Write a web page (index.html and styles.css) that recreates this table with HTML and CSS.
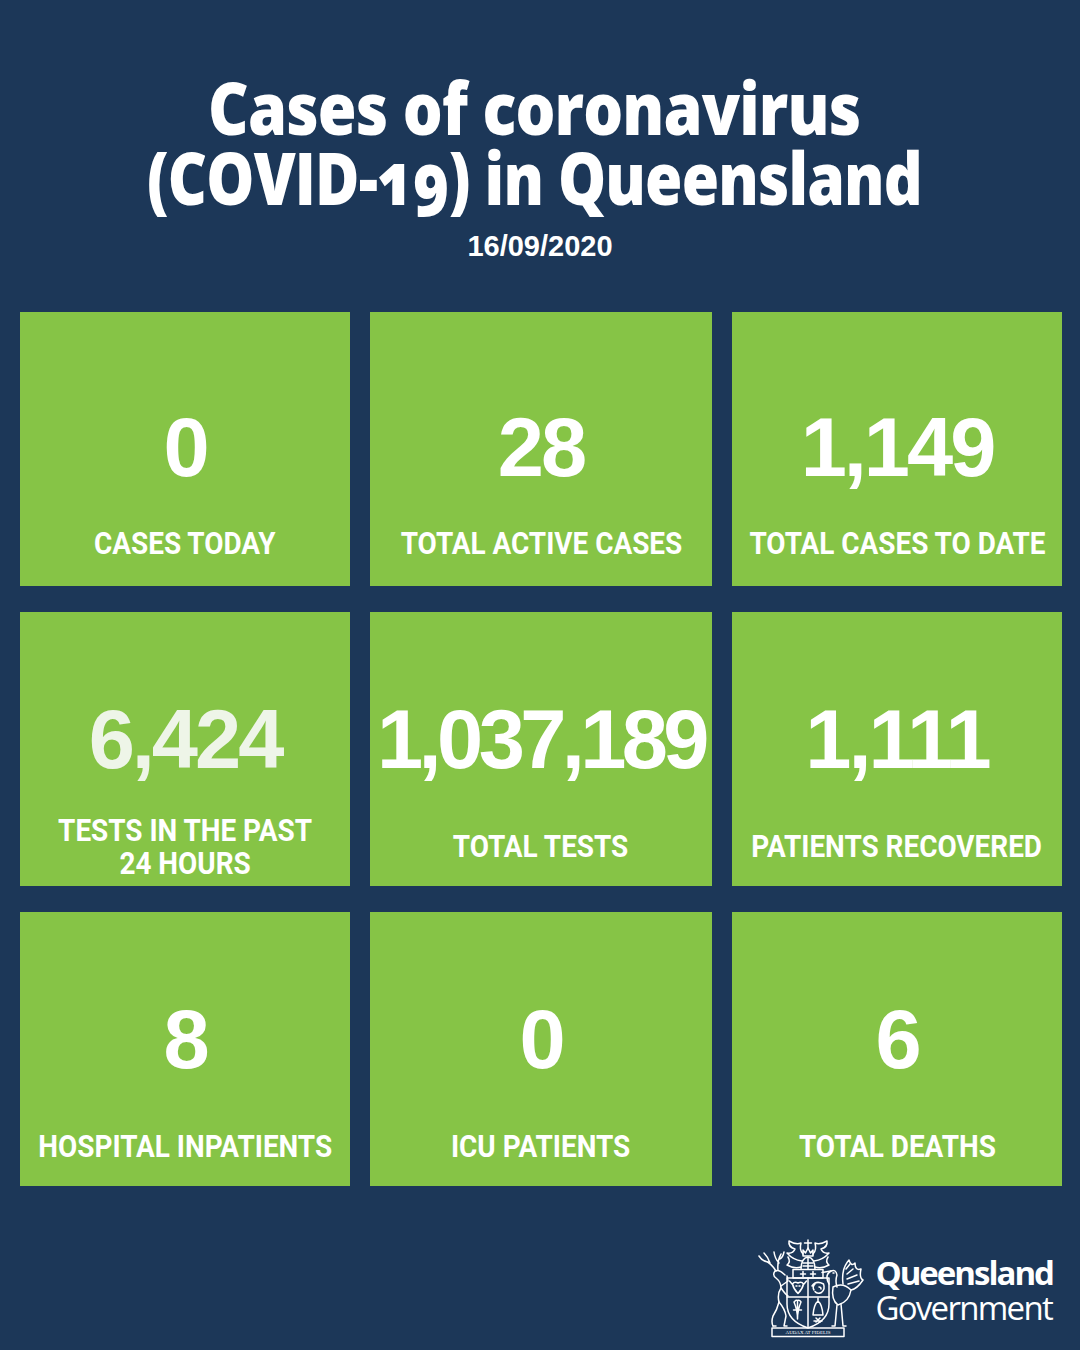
FILE: index.html
```html
<!DOCTYPE html>
<html lang="en">
<head>
<meta charset="utf-8">
<title>Cases of coronavirus (COVID-19) in Queensland</title>
<link rel="stylesheet" href="styles.css">
</head>
<body>
<header class="header">
  <h1 class="title">
    <span class="title-line title-line--first">Cases of coronavirus</span><br>
    <span class="title-line title-line--second">(COVID-<span class="onum">19</span>) in Queensland</span>
  </h1>
</header>
<p class="date">16/09/2020</p>

<main class="grid">
  <section class="stat stat--top">
    <div class="stat-value">0</div>
    <div class="stat-label-wrap"><div class="stat-label">CASES TODAY</div></div>
  </section>
  <section class="stat stat--top">
    <div class="stat-value">28</div>
    <div class="stat-label-wrap"><div class="stat-label">TOTAL ACTIVE CASES</div></div>
  </section>
  <section class="stat stat--top">
    <div class="stat-value">1,149</div>
    <div class="stat-label-wrap"><div class="stat-label">TOTAL CASES TO DATE</div></div>
  </section>

  <section class="stat">
    <div class="stat-value stat-value--soft">6,424</div>
    <div class="stat-label-wrap"><div class="stat-label">TESTS IN THE PAST<br>24 HOURS</div></div>
  </section>
  <section class="stat">
    <div class="stat-value stat-value--tight">1,037,189</div>
    <div class="stat-label-wrap"><div class="stat-label">TOTAL TESTS</div></div>
  </section>
  <section class="stat">
    <div class="stat-value">1,111</div>
    <div class="stat-label-wrap"><div class="stat-label">PATIENTS RECOVERED</div></div>
  </section>

  <section class="stat">
    <div class="stat-value">8</div>
    <div class="stat-label-wrap"><div class="stat-label">HOSPITAL INPATIENTS</div></div>
  </section>
  <section class="stat">
    <div class="stat-value">0</div>
    <div class="stat-label-wrap"><div class="stat-label">ICU PATIENTS</div></div>
  </section>
  <section class="stat">
    <div class="stat-value">6</div>
    <div class="stat-label-wrap"><div class="stat-label">TOTAL DEATHS</div></div>
  </section>
</main>

<footer class="footer">
  <svg class="arms" viewBox="0 0 108 104" width="108" height="104" aria-hidden="true">
    <g fill="none" stroke="#fff" stroke-width="1.5" stroke-linejoin="round" stroke-linecap="round">
      <!-- shield -->
      <path d="M30 44 H72 V70 Q72 87 51 94 Q30 87 30 70 Z"/>
      <path d="M30 63 H72 M51 63 V93 M51 44 V63"/>
      <!-- chief band -->
      <path d="M36 35.5 H66 V44 H36 Z"/>
      <path d="M46 37.5 v5 M43.5 40 h5 M56 37.5 v5 M53.5 40 h5"/>
      <!-- bull head -->
      <path d="M35.5 50 q2 -3 5.5 -1 q3.5 -2 5.5 1 q-1 5 -5.5 9.5 q-4.5 -4.5 -5.5 -9.5 z M35 50 l-2.5 -3 M47 50 l2.5 -3 M39 52 h1 M42 52 h1"/>
      <!-- ram head -->
      <path d="M55 52 q4 -6 11.5 -2 q2 5 -2 8.5 q-4.5 2 -6.5 -1 M58 50 q-3 3 -1 6 M62 53 q2 0 2 2"/>
      <!-- wheat sheaf -->
      <path d="M40.5 67 v18 M37 68 q3.5 8 3.5 17 M44 68 q-3.5 8 -3.5 17 M36.5 76 h8 M37.5 68 q1 -2.5 3 -1.5 q2 -1 3.5 1.5"/>
      <!-- bell / pile -->
      <path d="M56 81 Q57 70 61 67 Q65 70 66 81 Z M61 64 v3 M57 87 l8 0 M59 84 l4 4 M63 84 l-4 4"/>
      <!-- helmet -->
      <path d="M44 35.5 Q44 24 51 23 Q58 24 58 35.5"/>
      <path d="M46 29 h10 M46 32 h10 M51 24 v11"/>
      <!-- crown & crest -->
      <path d="M46 22 L46 16 L48.5 19 L51 14 L53.5 19 L56 16 L56 22 Z"/>
      <path d="M51 14 V6 M47.5 9 h7"/>
      <!-- mantling left -->
      <path d="M45 27 Q36 26 30 19 Q36 20 38 15 Q31 13 32 7 Q39 11 44 9 Q42 16 46 20"/>
      <path d="M44 33 Q37 35 30 31 Q34 28 31 23"/>
      <!-- mantling right -->
      <path d="M57 27 Q66 26 72 19 Q66 20 64 15 Q71 13 70 7 Q63 11 58 9 Q60 16 56 20"/>
      <path d="M58 33 Q65 35 72 31 Q68 28 71 23"/>
      <!-- stag -->
      <path d="M28 41 Q22 35 18 37 Q15 41 19 44 Q24 48 24 54 Q20 60 22 68 Q20 76 16 82 Q14 88 16 92"/>
      <path d="M24 54 Q29 61 31 62 M22 68 Q28 75 29 82 L27 92 M24 52 L31 47 L30 42 M16 92 h3 M27 92 h3"/>
      <path d="M19 37 Q14 29 8 27 M13 29 Q11 23 7 19 M11 28 Q5 27 2 22 M21 36 Q20 27 24 20 M22 29 Q18 25 17 18 M23 25 Q26 23 27 18"/>
      <!-- brolga -->
      <path d="M72 50 Q67 41 74 37 Q79 35 80 41 Q78 47 80 53"/>
      <path d="M74 37 L65 38.5 M76 39 h1"/>
      <path d="M76 53 Q86 48 94 56 Q92 68 81 71 Q74 66 76 53"/>
      <path d="M86 50 Q84 35 92 26 Q94 33 98 29 Q98 37 104 35 Q102 44 106 46 Q100 55 94 56"/>
      <path d="M90 40 L96 35 M90 45 L100 41 M91 50 L102 47 M89 35 L93 30"/>
      <path d="M80 71 L78 92 M84 70 L86 92 M78 92 h-3 M86 92 h3"/>
      <!-- motto scroll -->
      <rect x="15" y="94" width="72" height="8.5"/>
    </g>
    <text class="motto" x="51" y="100.4" text-anchor="middle">AUDAX AT FIDELIS</text>
  </svg>
  <div class="gov">
    <div class="gov-name">Queensland</div>
    <div class="gov-sub">Government</div>
  </div>
</footer>
</body>
</html>
```

FILE: styles.css
```css
* { box-sizing: border-box; }

html, body { margin: 0; padding: 0; }

body {
  width: 1080px;
  height: 1350px;
  overflow: hidden;
  background: #1c3758;
  color: #ffffff;
  font-family: "Liberation Sans", Arial, sans-serif;
}

.header {
  padding-top: 72px;
  padding-right: 12px;
  text-align: center;
}

.title {
  margin: 0;
  font-family: "Open Sans", "DejaVu Sans", sans-serif;
  font-weight: 800;
  font-size: 73px;
  line-height: 70px;
}

.title-line {
  display: inline-block;
  white-space: nowrap;
  letter-spacing: -1px;
}

.title-line--first {
  transform: scaleX(0.86);
}

.title-line--second {
  transform: scaleX(0.829);
}

.onum {
  font-variant-numeric: oldstyle-nums;
}

.date {
  margin: 20px 0 0;
  text-align: center;
  font-family: "Liberation Sans", Arial, sans-serif;
  font-weight: 700;
  font-size: 29px;
  line-height: 29px;
}

.grid {
  display: grid;
  grid-template-columns: 330px 342px 330px;
  grid-auto-rows: 274px;
  column-gap: 20px;
  row-gap: 26px;
  margin-top: 51px;
  padding-left: 20px;
}

.stat {
  background: #86c446;
  display: flex;
  flex-direction: column;
  align-items: center;
  padding-top: 86px;
}

.stat--top {
  padding-top: 94px;
}

.stat-value {
  font-family: "Liberation Sans", Arial, sans-serif;
  font-weight: 700;
  font-size: 83px;
  line-height: 83px;
  letter-spacing: -3px;
  white-space: nowrap;
}

.stat-value--tight {
  letter-spacing: -4.6px;
}

.stat-value--soft {
  color: #eef5e8;
}

.stat-label-wrap {
  flex: 1;
  display: flex;
  align-items: center;
  justify-content: center;
  padding-top: 26px;
}

.stat--top .stat-label-wrap {
  padding-top: 12px;
}

.stat-label {
  font-family: Roboto, "Liberation Sans", sans-serif;
  font-weight: 700;
  font-size: 31px;
  line-height: 33px;
  text-align: center;
  white-space: nowrap;
  transform: scaleX(0.9);
}

.footer {
  display: flex;
  justify-content: flex-end;
  align-items: flex-start;
  gap: 10px;
  margin-top: 48px;
  padding-right: 27px;
}

.arms {
  display: block;
  flex: none;
}

.motto {
  fill: #ffffff;
  font-family: "Liberation Serif", serif;
  font-size: 5px;
}

.gov {
  margin-top: 21px;
  font-family: "Open Sans", "DejaVu Sans", sans-serif;
  font-size: 33px;
  line-height: 35px;
}

.gov-name {
  font-weight: 700;
  letter-spacing: -2px;
}

.gov-sub {
  font-weight: 400;
  letter-spacing: -1.7px;
}
```
